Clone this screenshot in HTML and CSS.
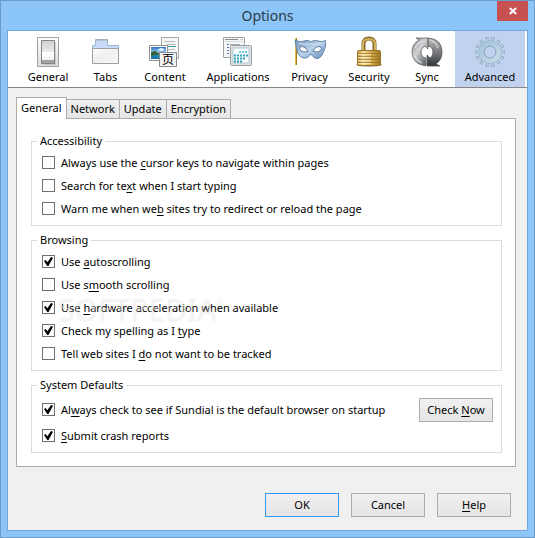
FILE: index.html
```html
<!DOCTYPE html>
<html lang="en">
<head>
<meta charset="utf-8">
<title>Options</title>
<link rel="stylesheet" href="styles.css">
</head>
<body>
<div class="window">
  <header class="titlebar">
    <h1>Options</h1>
    <button class="close" type="button" aria-label="Close"><svg width="8" height="8" viewBox="0 0 8 8"><path d="M.8 1 7.2 7M7.2 1 .8 7" stroke="#fff" stroke-width="1.9"/></svg></button>
  </header>
  <main class="client">
    <nav class="toolbar">
      <button type="button"><svg viewBox="0 0 32 32">
        <defs>
          <linearGradient id="plate" x2="0" y2="1"><stop stop-color="#fff"/><stop offset="1" stop-color="#ddd"/></linearGradient>
          <linearGradient id="rocker" x2="0" y2="1"><stop stop-color="#d2d2d2"/><stop offset=".6" stop-color="#ebebeb"/><stop offset=".6" stop-color="#fff"/><stop offset="1" stop-color="#f2f2f2"/></linearGradient>
        </defs>
        <path d="M5.500 1.500h21v29h-21z" fill="url(#plate)" stroke="#a2a2a2"/>
        <path d="M11 6h13v23H11z" fill="#aaa" opacity=".45"/>
        <path d="M9.500 4.500h13v23h-13z" fill="#a3a3a3" stroke="#858585"/>
        <path d="M10 5h12v19H10z" fill="url(#rocker)"/>
      </svg>General</button>
      <button type="button"><svg viewBox="0 0 32 32">
        <defs><linearGradient id="sheet" x2=".8" y2="1"><stop stop-color="#fff"/><stop offset=".5" stop-color="#efefef"/><stop offset="1" stop-color="#f8f8f8"/></linearGradient></defs>
        <path d="M2.500 12V9.500h3v-6h12v6h11V13" fill="#c7dcf8" stroke="#9eb4d2"/>
        <path d="M6 4h11" stroke="#a9a9a9"/>
        <path d="M2.500 12.500h26v15h-26z" fill="url(#sheet)" stroke="#a1a1a1"/>
      </svg>Tabs</button>
      <button type="button"><svg viewBox="0 0 32 32">
        <defs><linearGradient id="sky" x2="0" y2="1"><stop stop-color="#2e70c5"/><stop offset=".5" stop-color="#a4d9f5"/><stop offset=".55" stop-color="#477f54"/><stop offset=".7" stop-color="#198dbb"/><stop offset="1" stop-color="#126ba6"/></linearGradient></defs>
        <path d="M12.500 1.500h17v21h-17z" fill="#f6f6f6" stroke="#a7a7a7"/>
        <path d="M15 5.500h11M18 8.500h9M15 13.500h11" stroke="#bbb"/><path d="M17 10.500h10" stroke="#3d9eae"/>
        <path d="M.5 9.500h18v15H.5z" fill="#fff" stroke="#929292"/>
        <path d="M2 11h15v12H2z" fill="url(#sky)"/><path d="m2 16 4-1 5 3-9 2z" fill="#365f39"/><path d="m8 14 4-2 4 1-3 2z" fill="#edf8ff"/>
        <path d="M10.500 16.500h17v14h-17z" fill="#f3f3f3" stroke="#8c8c8c"/>
        <text class="glyph" x="13" y="28">页</text>
      </svg>Content</button>
      <button type="button"><svg viewBox="0 0 32 32">
        <path d="M1.500 1.500h21v20h-21z" fill="#f5f5f5" stroke="#9da4a8"/>
        <path d="M3 3.500h13" stroke="#858d92"/><path d="M18 3.500h3" stroke="#ccc"/><path d="M3 5.500h18" stroke="#d4dce0"/>
        <path d="M5 8.500h2M5 11.500h2M5 14.500h2M5 17.500h2" stroke="#5475bc"/><path d="M8 8.500h10M8 11.500h4" stroke="#aaa"/>
        <rect x="8.500" y="9.500" width="21" height="20" rx="1" fill="#dce2e5" stroke="#999fa2"/>
        <path d="M11 12h16v15H11z" fill="#f8fcfd" stroke="#b5c7ce"/>
        <path d="M17 16h9" stroke="#65cbe2" stroke-width="2" stroke-dasharray="2 1"/>
        <path d="M12 19.500h14M12 22.500h11" stroke="#34a3c1" stroke-width="2" stroke-dasharray="2 1"/>
        <path d="M12 25.500h8" stroke="#2b98b7" stroke-width="2" stroke-dasharray="2 1"/>
      </svg>Applications</button>
      <button type="button"><svg viewBox="0 0 32 32">
        <defs><linearGradient id="mask" x2="1" y2="1"><stop stop-color="#7594b5"/><stop offset=".5" stop-color="#b9d2ec"/><stop offset="1" stop-color="#648bb6"/></linearGradient></defs>
        <path d="M2 2v27" stroke="#a67716" stroke-width="2"/><path d="M1.500 2v27" stroke="#e5bb4b"/>
        <path d="M1 4q5 3 9 1 4-2 7 1 3-3 7-1 4 2 8-1 0 9-4 15-3 5-7 3-2-1-4-4-2 3-5 4-5 1-8-4Q2 12 1 4z" fill="url(#mask)" stroke="#6689ae"/>
        <path d="M5 12q4-4 9 3-6 3-9-3zM19 15q4-7 9-3-3 6-9 3z" fill="#fff" stroke="#57799d"/>
        <path d="M5 7q5 2 11 1 7 1 12-1" fill="none" stroke="#d2e3f3"/>
      </svg>Privacy</button>
      <button type="button"><svg viewBox="0 0 32 32">
        <defs><linearGradient id="brass"><stop stop-color="#bd983f"/><stop offset=".25" stop-color="#f7dfa1"/><stop offset=".6" stop-color="#d2aa4c"/><stop offset="1" stop-color="#9d7521"/></linearGradient></defs>
        <ellipse cx="16" cy="28.500" rx="13" ry="2.500" fill="#555" opacity=".45"/>
        <path d="M10.500 16V8q0-5.500 5.500-5.500T21.500 8v8" fill="none" stroke="#8b6a25" stroke-width="4"/>
        <path d="M10 16V8q0-5 6-5t6 5v8" fill="none" stroke="#d3b361" stroke-width="2"/>
        <rect x="4.500" y="14.500" width="23" height="15" rx="1" fill="url(#brass)" stroke="#9b7527"/>
        <path d="M5 17.500h22M5 20.500h22M5 23.500h22M5 26.500h22" stroke="#987126" opacity=".7"/>
        <path d="M5 18.500h13M5 21.500h13M5 24.500h13M5 27.500h13" stroke="#fff0c3" opacity=".75"/>
      </svg>Security</button>
      <button type="button"><svg viewBox="0 0 32 32">
        <defs>
          <linearGradient id="steel" x2=".8" y2="1"><stop stop-color="#777a7e"/><stop offset=".45" stop-color="#d0d2d4"/><stop offset="1" stop-color="#606366"/></linearGradient>
          <linearGradient id="dark" x2="0" y2="1"><stop stop-color="#bbb"/><stop offset=".5" stop-color="#7a7c7f"/><stop offset="1" stop-color="#303336"/></linearGradient>
        </defs>
        <path d="M15 30Q1 28 1 16 1 8 8 4L5 2h12v11l-3-3q-4 2-4 6 0 5 5 6z" fill="url(#steel)" stroke="#696b6d" stroke-width=".8"/>
        <path d="M17 2q14 1 14 14 0 8-6 12l4 2H16V19l3 3q3-2 3-6 0-5-5-6z" fill="url(#dark)" stroke="#555" stroke-width=".8"/>
        <path d="M4 12q3-6 8-7M4 20q2 5 7 7M19 4q6 2 8 8" fill="none" stroke="#eee" stroke-width="1.300" opacity=".7"/>
      </svg>Sync</button>
      <button type="button" class="active"><svg viewBox="0 0 32 32">
        <defs><linearGradient id="gear" x2="1" y2="1"><stop stop-color="#a8c4df"/><stop offset="1" stop-color="#c3dbe4"/></linearGradient></defs>
        <circle cx="16" cy="16" r="13" fill="none" stroke="#839fba" stroke-width="4" pathLength="140" stroke-dasharray="5 5" stroke-dashoffset="2.500"/>
        <circle cx="16" cy="16" r="8.500" fill="none" stroke="#8ba7c1" stroke-width="6"/>
        <circle cx="16" cy="16" r="12.500" fill="none" stroke="#b4cfe0" stroke-width="4" pathLength="140" stroke-dasharray="3 7" stroke-dashoffset="1.500"/>
        <circle cx="16" cy="16" r="8.500" fill="none" stroke="url(#gear)" stroke-width="5"/>
        <circle cx="16" cy="16" r="6" fill="none" stroke="#8eabc4"/>
      </svg>Advanced</button>
    </nav>
    <div class="content">
      <div class="tabs" role="tablist">
        <button type="button" role="tab" aria-selected="true">General</button>
        <button type="button" role="tab" aria-selected="false">Network</button>
        <button type="button" role="tab" aria-selected="false">Update</button>
        <button type="button" role="tab" aria-selected="false">Encryption</button>
      </div>
      <section class="panel">
        <fieldset>
          <legend>Accessibility</legend>
          <label><input type="checkbox"><span>Always use the <u>c</u>ursor keys to navigate within pages</span></label>
          <label><input type="checkbox"><span>Search for te<u>x</u>t when I start typing</span></label>
          <label><input type="checkbox"><span>Warn me when we<u>b</u> sites try to redirect or reload the page</span></label>
        </fieldset>
        <fieldset>
          <legend>Browsing</legend>
          <label><input type="checkbox" checked><span>Use <u>a</u>utoscrolling</span></label>
          <label><input type="checkbox"><span>Use s<u>m</u>ooth scrolling</span></label>
          <label><input type="checkbox" checked><span>Use <u>h</u>ardware acceleration when available</span></label>
          <label><input type="checkbox" checked><span>Check my spelling as I <u>t</u>ype</span></label>
          <label><input type="checkbox"><span>Tell web sites I <u>d</u>o not want to be tracked</span></label>
          <div class="watermark">SOFTPEDIA<sup>®</sup></div>
        </fieldset>
        <fieldset>
          <legend>System Defaults</legend>
          <div class="row">
            <label><input type="checkbox" checked><span>Al<u>w</u>ays check to see if Sundial is the default browser on startup</span></label>
            <button class="btn" type="button">Check <u>N</u>ow</button>
          </div>
          <label><input type="checkbox" checked><span><u>S</u>ubmit crash reports</span></label>
        </fieldset>
      </section>
      <footer class="actions">
        <button class="btn primary" type="button">OK</button>
        <button class="btn" type="button">Cancel</button>
        <button class="btn" type="button"><u>H</u>elp</button>
      </footer>
    </div>
  </main>
</div>
</body>
</html>
```
FILE: styles.css
```css
* {
  box-sizing: border-box;
}

body {
  margin: 0;
  color: #000;
  font: 11px/16px "Noto Sans", "Open Sans", sans-serif;
}

button {
  margin: 0;
  padding: 0;
  color: inherit;
  font: inherit;
  white-space: nowrap;
}

u {
  text-underline-offset: 2px;
  text-decoration-skip-ink: none;
}

.window {
  display: flex;
  flex-direction: column;
  min-height: 100vh;
  padding: 0 6px 6px;
  border: 1px solid #6a9bc9;
  background: #8cc6f9;
}

.titlebar {
  display: flex;
  justify-content: center;
  position: relative;
  height: 29px;
}

.titlebar h1 {
  margin: 0;
  color: #2b3a48;
  font-size: 14px;
  font-weight: 400;
  line-height: 29px;
}

.close {
  display: grid;
  place-items: center;
  position: absolute;
  top: 0;
  right: 0;
  width: 31px;
  height: 20px;
  border: 0;
  background: #c75050;
}

.client {
  display: flex;
  flex: 1;
  flex-direction: column;
  border: 1px solid #70a8dc;
  background: #f0f0f0;
}

.toolbar {
  display: grid;
  grid-template-columns: 58fr 57fr 62fr 84fr 59fr 60fr 56fr 70fr;
  height: 57px;
  padding: 0 2px 0 11px;
  border-bottom: 1px solid #858585;
  background: #fff;
}

.toolbar button {
  display: flex;
  flex-direction: column;
  align-items: center;
  padding-top: 5px;
  border: 0;
  background: none;
  line-height: 18px;
}

.toolbar .active {
  background: #c1d2ee;
}

.toolbar svg {
  width: 32px;
  height: 32px;
}

.glyph {
  font: 12px "Noto Sans CJK SC", sans-serif;
}

.content {
  padding: 9px 11px 13px 8px;
}

.tabs {
  display: flex;
  align-items: flex-end;
  height: 21px;
}

.tabs button {
  height: 19px;
  padding: 0 4px;
  border: 1px solid #acacac;
  border-width: 1px 1px 0 0;
  background: linear-gradient(#f0f0f0, #e5e5e5);
}

.tabs [aria-selected="true"] {
  z-index: 1;
  height: 22px;
  margin-bottom: -1px;
  padding-bottom: 2px;
  border-left-width: 1px;
  background: #fff;
}

.panel {
  display: flex;
  flex-direction: column;
  gap: 6px;
  padding: 14px 13px 13px 14px;
  border: 1px solid #acacac;
  background: #fff;
}

fieldset {
  position: relative;
  min-width: 0;
  margin: 0;
  padding: 2px 8px 5px 10px;
  border: 1px solid #dcdcdc;
}

legend {
  margin-left: -5px;
  padding: 0 3px;
}

label {
  display: flex;
  align-items: center;
  gap: 6px;
  height: 23px;
}

input {
  appearance: none;
  width: 13px;
  height: 13px;
  margin: 0;
  border: 1px solid #707070;
  background: #fff;
}

input:checked::before {
  display: block;
  width: 9px;
  height: 9px;
  margin: 1px;
  background: #000;
  clip-path: polygon(0 45%, 18% 32%, 38% 58%, 78% 0, 100% 8%, 50% 100%, 36% 100%);
  content: "";
}

.row {
  display: flex;
  align-items: center;
  justify-content: space-between;
  height: 29px;
}

.btn {
  width: 74px;
  height: 24px;
  border: 1px solid #acacac;
  background: linear-gradient(#f0f0f0, #e5e5e5);
}

.btn.primary {
  border-color: #3399ff;
}

.actions {
  display: flex;
  justify-content: flex-end;
  gap: 12px;
  padding: 26px 5px 0 0;
}

.watermark {
  position: absolute;
  top: 46px;
  left: 25px;
  color: rgb(255 255 255 / 40%);
  font-size: 30px;
  line-height: 30px;
  text-shadow: 1px 1px 2px rgb(0 0 0 / 8%);
  opacity: .99;
  pointer-events: none;
}

.watermark sup {
  font-size: 10px;
  line-height: 10px;
  vertical-align: 14px;
}
```
